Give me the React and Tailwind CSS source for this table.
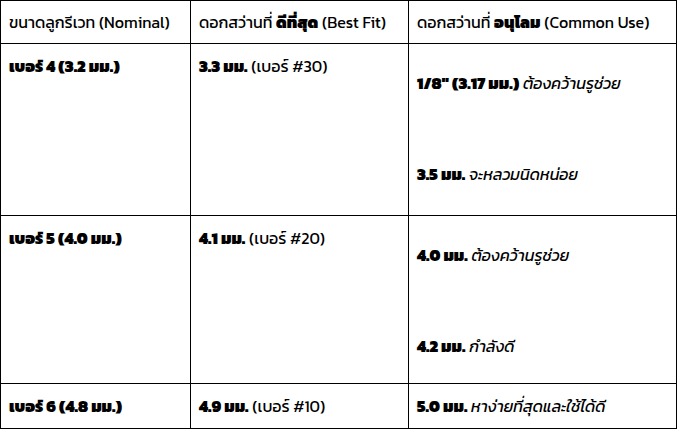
const rows = [
  {
    size: "เบอร์ 4 (3.2 มม.)",
    best: "3.3 มม.",
    bestNo: "(เบอร์ #30)",
    common: [
      { b: "1/8\" (3.17 มม.)", i: "ต้องคว้านรูช่วย" },
      { b: "3.5 มม.", i: "จะหลวมนิดหน่อย" },
    ],
    h: "h-[172px]",
  },
  {
    size: "เบอร์ 5 (4.0 มม.)",
    best: "4.1 มม.",
    bestNo: "(เบอร์ #20)",
    common: [
      { b: "4.0 มม.", i: "ต้องคว้านรูช่วย" },
      { b: "4.2 มม.", i: "กำลังดี" },
    ],
    h: "h-[168px]",
  },
  {
    size: "เบอร์ 6 (4.8 มม.)",
    best: "4.9 มม.",
    bestNo: "(เบอร์ #10)",
    common: [{ b: "5.0 มม.", i: "หาง่ายที่สุดและใช้ได้ดี" }],
    h: "h-[45px]",
  },
];

export default function App() {
  return (
    <div className="w-[677px] h-[429px] bg-white text-black text-[16px] leading-6 font-['Kanit','Prompt','Noto_Sans_Thai','Noto_Sans',sans-serif]">
      <table className="w-[677px] border-collapse table-fixed">
        <colgroup>
          <col className="w-[190px]" />
          <col className="w-[218px]" />
          <col />
        </colgroup>
        <thead>
          <tr className="h-[43px]">
            <th className="border border-black px-2 text-left font-normal">ขนาดลูกรีเวท (Nominal)</th>
            <th className="border border-black px-2 text-left font-normal">
              ดอกสว่านที่ <b className="font-black">ดีที่สุด</b> (Best Fit)
            </th>
            <th className="border border-black px-2 text-left font-normal">
              ดอกสว่านที่ <b className="font-black">อนุโลม</b> (Common Use)
            </th>
          </tr>
        </thead>
        <tbody>
          {rows.map((r) => {
            const single = r.common.length === 1;
            return (
              <tr key={r.size} className={r.h}>
                <td className={`border border-black px-2 ${single ? "align-middle" : "align-top pt-[10px]"}`}>
                  <b className="font-black">{r.size}</b>
                </td>
                <td className={`border border-black px-2 ${single ? "align-middle" : "align-top pt-[10px]"}`}>
                  <b className="font-black">{r.best}</b> {r.bestNo}
                </td>
                <td className={`border border-black px-2 ${single ? "align-middle" : "align-top pt-[27px]"}`}>
                  {r.common.map((c, idx) => (
                    <p key={c.b} className={idx > 0 ? "mt-[67px]" : ""}>
                      <b className="font-black">{c.b}</b> <i>{c.i}</i>
                    </p>
                  ))}
                </td>
              </tr>
            );
          })}
        </tbody>
      </table>
    </div>
  );
}
